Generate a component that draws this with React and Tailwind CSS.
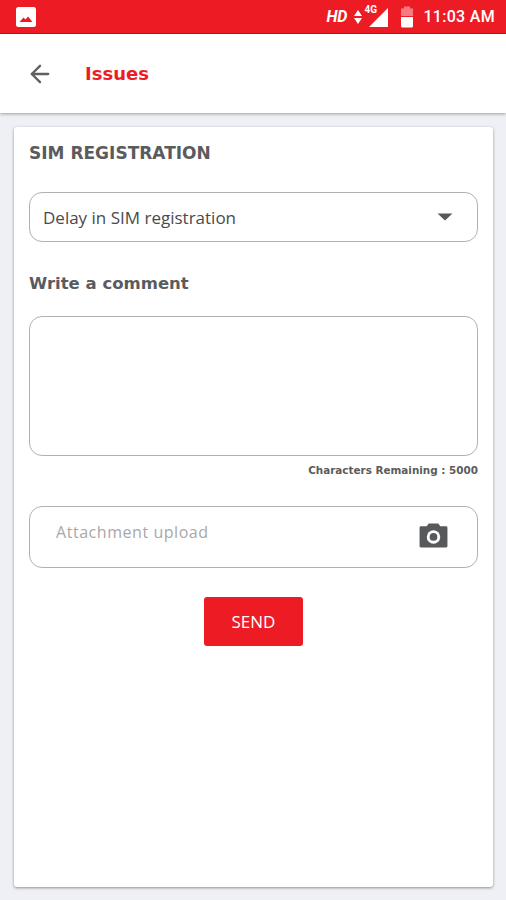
import React from "react";
import { ArrowLeft } from "lucide-react";

const bodyFont = "font-['Open_Sans',sans-serif]";
const headFont = "font-['DejaVu_Sans',sans-serif]";

function StatusBar() {
  return (
    <div className="h-[34px] shrink-0 bg-[#ed1c24] border-b border-[#c5141b] flex items-center justify-between pl-4 pr-[11px]">
      {/* picture notification icon */}
      <svg width="20" height="20" viewBox="0 0 20 20">
        <rect width="20" height="20" rx="2.5" fill="#fff" />
        <path d="M3.5 15 L7.5 10.5 L9.5 12.5 L12 9.5 L16.5 15 Z" fill="#ed1c24" />
      </svg>
      <div className="flex items-center text-white">
        <span className="font-['Roboto',sans-serif] italic font-bold text-[16px] mr-[6px]">HD</span>
        <svg width="10" height="18" viewBox="0 0 10 18" className="mr-[4px]">
          <path d="M5 2 L9 8 H1 Z M1 10 H9 L5 16 Z" fill="#fff" />
        </svg>
        <div className="relative w-[22px] h-[22px] mr-[11px]">
          <svg width="22" height="22" viewBox="0 0 22 22" className="absolute left-[1px] top-[1px]">
            <path d="M20 1 V20 H1 Z" fill="#fff" />
          </svg>
          <span className="absolute left-[-3px] top-[-1px] font-['Roboto',sans-serif] font-bold text-[10px] leading-none">4G</span>
        </div>
        <svg width="14" height="22" viewBox="0 0 14 22" className="mr-[9px]">
          <path d="M4 0.5 H10 V2.5 H13 V10 H1 V2.5 H4 Z" fill="#f77a80" />
          <path d="M1 11 H13 V20 Q13 21.5 11.5 21.5 H2.5 Q1 21.5 1 20 Z" fill="#fff" />
        </svg>
        <span className="font-['Roboto',sans-serif] font-medium text-[16px] tracking-[0.3px]">11:03 AM</span>
      </div>
    </div>
  );
}

function Header() {
  return (
    <div className="h-[79px] shrink-0 bg-white flex items-center pl-[26px] shadow-[0_1px_3px_rgba(0,0,0,0.35)] relative">
      <ArrowLeft size={28} strokeWidth={2} className="text-[#5f6062]" />
      <h1 className={`${headFont} ml-[31px] text-[#ed1c24] font-bold text-[18px] leading-none`}>Issues</h1>
    </div>
  );
}

export default function App() {
  return (
    <div className="w-[506px] h-[900px] overflow-hidden bg-[#eef0f5] flex flex-col">
      <StatusBar />
      <Header />
      <div className="flex-1 pt-[14px] pb-[13px] pl-[14px] pr-[13px] flex">
        <div className="flex-1 bg-white rounded-[3px] shadow-[0_1px_3px_rgba(0,0,0,0.4)] px-[15px] flex flex-col">
          <h2 className={`${headFont} mt-[16px] h-[20px] leading-[21px] text-[#5a5b5d] font-bold text-[17px]`}>SIM REGISTRATION</h2>

          <div className="mt-[29px] h-[50px] border border-[#b0b1b5] rounded-[13px] flex items-center justify-between pl-[13px] pr-[24px]">
            <span className={`${bodyFont} relative top-[1px] text-[17px] text-[#4a4a4c]`}>Delay in SIM registration</span>
            <svg width="16" height="8" viewBox="0 0 16 8">
              <path d="M0.5 0.5 H15.5 L8 7.5 Z" fill="#58595b" />
            </svg>
          </div>

          <h3 className={`${headFont} mt-[31px] h-[20px] leading-[21px] text-[#5a5b5d] font-bold text-[16.5px]`}>Write a comment</h3>

          <div className="mt-[23px] h-[140px] border border-[#b0b1b5] rounded-[13px]" />

          <p className={`${headFont} mt-[8px] h-[12px] leading-[13px] text-right text-[#5a5b5d] font-bold text-[10.4px]`}>Characters Remaining : 5000</p>

          <div className="mt-[30px] h-[62px] border border-[#b0b1b5] rounded-[13px] flex justify-between pl-[26px] pr-[29px]">
            <span className={`${bodyFont} mt-[13px] h-[24px] text-[16px] tracking-[0.55px] text-[#a7a8aa]`}>Attachment upload</span>
            <svg width="29" height="25" viewBox="0 0 30 26" className="mt-[16px]">
              <path d="M10 0.5 H20 L22 3.5 H28 Q29.5 3.5 29.5 5 V24 Q29.5 25.5 28 25.5 H2 Q0.5 25.5 0.5 24 V5 Q0.5 3.5 2 3.5 H8 Z" fill="#58595b" />
              <circle cx="15" cy="14.5" r="7" fill="#fff" />
              <circle cx="15" cy="14.5" r="4" fill="#58595b" />
            </svg>
          </div>

          <div className="mt-[29px] flex justify-center">
            <button className={`${bodyFont} w-[99px] h-[49px] bg-[#ed1c24] rounded-[3px] text-white text-[17px] font-medium`}>SEND</button>
          </div>
        </div>
      </div>
    </div>
  );
}
